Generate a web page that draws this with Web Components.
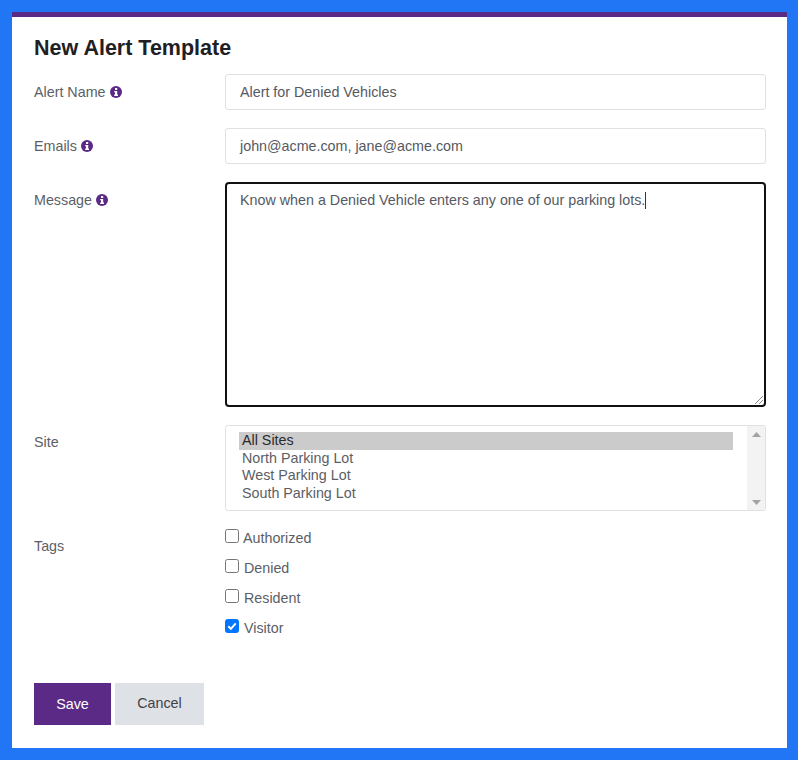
<!DOCTYPE html>
<html lang="en"><head><meta charset="utf-8"><title>New Alert Template</title>
<style>
html,body{margin:0;padding:0;height:100%}
body{background:#2176f5;font-family:"Liberation Sans",Arial,sans-serif;}
</style></head><body>
<template id="t-info"><style>:host{display:inline-block;width:12px;height:12px;line-height:0;vertical-align:-1px;margin-left:4px}svg{display:block}</style>
<svg width="12" height="12" viewBox="0 0 12 12"><circle cx="6" cy="6" r="6" fill="#5b2a86"/><rect x="5" y="2" width="2.2" height="2" fill="#fff"/><path d="M4.2 5h3v3.6h.8V10H4.2V8.6H5V6.3h-.8z" fill="#fff"/></svg></template>

<template id="t-row"><style>
:host{display:grid;grid-template-columns:191px 541px;margin-bottom:18px}
.l{font-size:14.3px;line-height:20px;color:#5d5f66;padding-top:var(--lp,7.500px)}
</style><div class="l"><slot name="label"></slot></div><div class="c"><slot></slot></div></template>

<template id="t-input"><style>
:host{display:block;box-sizing:border-box;height:36px;border:1px solid #dfe1e5;border-radius:3px;padding:0 14px;font-size:14.3px;line-height:34px;color:#555963;background:#fff}
</style><slot></slot></template>

<template id="t-area"><style>
:host{display:block;box-sizing:border-box;height:225px;border:2px solid #111;border-radius:4px;padding:6px 13px;font-size:14.3px;line-height:20px;color:#555963;background:#fff;position:relative}
.caret{display:inline-block;width:1px;height:17px;background:#333;vertical-align:-4px}
svg{position:absolute;right:0;bottom:0}
</style><slot></slot><span class="caret"></span><svg width="11" height="11" viewBox="0 0 11 11"><path d="M10 2 2 10M10 6 6 10" stroke="#8a8a8a" stroke-width="1" fill="none"/></svg></template>

<template id="t-list"><style>
:host{display:flex;box-sizing:border-box;height:86px;border:1px solid #dfe1e5;border-radius:3px;background:#fff;overflow:hidden}
.opts{flex:1;padding:6px 14px 0 13px;font-size:14.3px;line-height:17.6px;color:#5b5e66}
.bar{width:18px;background:#f3f3f4;display:flex;flex-direction:column;justify-content:space-between;align-items:center;padding:6px 0 5px}
</style><div class="opts"><slot></slot></div><div class="bar">
<svg width="9" height="5" viewBox="0 0 9 5"><path d="M4.5 0 9 5H0z" fill="#a3a3a3"/></svg>
<svg width="9" height="5" viewBox="0 0 9 5"><path d="M0 0h9L4.500 5z" fill="#a3a3a3"/></svg></div></template>

<template id="t-opt"><style>
:host{display:block;padding-left:3px;height:17.6px}
:host([selected]){background:#cbcbcb;color:#2a2a2a}
</style><slot></slot></template>

<template id="t-check"><style>
:host{display:flex;align-items:center;height:30px;font-size:14.3px;color:#5b5e66;padding-top:1px;margin-bottom:-1px}
.b{box-sizing:border-box;width:14px;height:14px;border:1px solid #767676;border-radius:2.500px;margin-right:5px;background:#fff;position:relative;top:-2px}
:host(:first-child) .b{margin-right:4px}
:host([checked]) .b{background:#0075ff;border-color:#0075ff}
svg{display:none}
:host([checked]) svg{display:block}
</style><span class="b"><svg width="12" height="12" viewBox="0 0 12 12"><path d="M2.300 6.200 4.900 8.800 9.700 3.300" stroke="#fff" stroke-width="2" fill="none"/></svg></span><slot></slot></template>

<template id="t-btn"><style>
:host{display:flex;align-items:center;justify-content:center;box-sizing:border-box;height:42px;font-size:14.3px;width:var(--w);background:var(--bg);color:var(--fg);padding-bottom:var(--pb,0)}
</style><slot></slot></template>

<template id="t-card"><style>
:host{display:block;box-sizing:border-box;margin:12px 11px 12px 12px;height:736px;background:#fff;border-top:5px solid #5b2a86;padding:18px 22px 0}
h1{margin:0 0 12px;font-size:21.5px;line-height:27px;font-weight:700;color:#1f2023}
.btns{display:flex;gap:4px;margin-top:41px}
</style><h1><slot name="title"></slot></h1><slot></slot><div class="btns"><slot name="buttons"></slot></div></template>

<alert-card>
<span slot="title">New Alert Template</span>
<form-row><span slot="label">Alert Name<info-icon></info-icon></span><text-field>Alert for Denied Vehicles</text-field></form-row>
<form-row><span slot="label">Emails<info-icon></info-icon></span><text-field>john@acme.com, jane@acme.com</text-field></form-row>
<form-row><span slot="label">Message<info-icon></info-icon></span><text-area>Know when a Denied Vehicle enters any one of our parking lots.</text-area></form-row>
<form-row style="margin-bottom:11px;--lp:7px"><span slot="label">Site</span><list-box><list-opt selected>All Sites</list-opt><list-opt>North Parking Lot</list-opt><list-opt>West Parking Lot</list-opt><list-opt>South Parking Lot</list-opt></list-box></form-row>
<form-row style="--lp:14px;margin:0"><span slot="label">Tags</span><div><check-item>Authorized</check-item><check-item>Denied</check-item><check-item>Resident</check-item><check-item checked>Visitor</check-item></div></form-row>
<push-btn slot="buttons" style="--w:77px;--bg:#5b2a86;--fg:#fff">Save</push-btn>
<push-btn slot="buttons" style="--w:89px;--bg:#dee1e6;--fg:#3f4147;--pb:2px">Cancel</push-btn>
</alert-card>
<script>
const map={'info-icon':'t-info','form-row':'t-row','text-field':'t-input','text-area':'t-area','list-box':'t-list','list-opt':'t-opt','check-item':'t-check','push-btn':'t-btn','alert-card':'t-card'};
for(const [n,id] of Object.entries(map)){
  customElements.define(n,class extends HTMLElement{constructor(){super();this.attachShadow({mode:'open'}).appendChild(document.getElementById(id).content.cloneNode(true));}});
}
</script>
</body></html>
